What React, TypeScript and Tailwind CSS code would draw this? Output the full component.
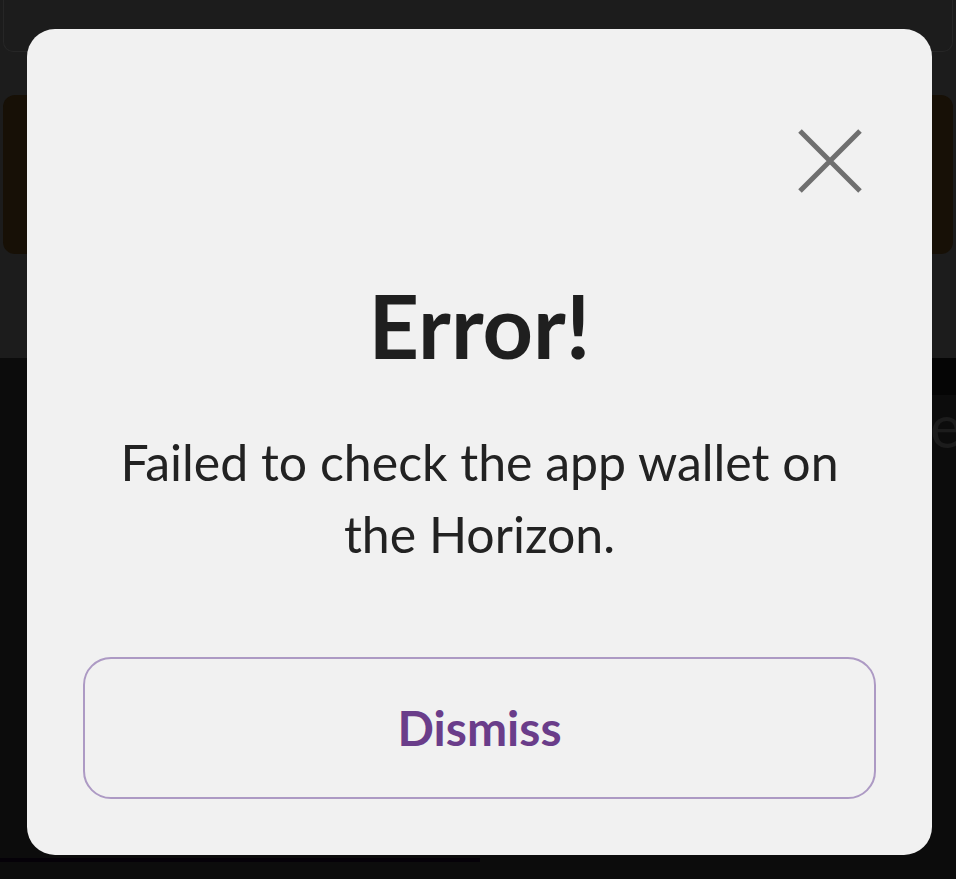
export default function App() {
  return (
    <div className="relative w-[956px] h-[879px] overflow-hidden bg-[#0c0c0c] font-['Lato','Open_Sans',sans-serif]">
      {/* Dimmed page behind */}
      <div className="flex flex-col">
        <div className="bg-[#1c1c1c] h-[358px] px-[3px] pt-0 flex flex-col">
          <div className="h-[52px] rounded-b-[10px] border border-t-0 border-[#262626]"></div>
          <div className="mt-[43px] h-[159px] rounded-[12px] bg-[#171006]"></div>
        </div>
        <div className="h-[500px] flex">
          <div className="flex-1"></div>
          <div className="w-[30px] flex flex-col">
            <div className="h-[37px] bg-[#050505]"></div>
            <div className="text-[60px] leading-[60px] text-[#1c1c1c] pl-[4px]">e</div>
          </div>
        </div>
        <div className="h-[4px] w-[480px] bg-[#050108]"></div>
      </div>

      {/* Modal */}
      <div className="absolute left-[27px] top-[29px] w-[905px] h-[826px] rounded-[28px] bg-[#f1f1f1] flex flex-col px-[56px]">
        <div className="flex justify-end pt-[99px] pr-[13px]">
          <button className="w-[66px] h-[66px] flex items-center justify-center">
            <svg width="66" height="66" viewBox="0 0 66 66" fill="none" stroke="#6f6f6f" strokeWidth="5">
              <path d="M3 3L63 63M63 3L3 63" />
            </svg>
          </button>
        </div>
        <h2 className="mt-[81px] text-center text-[88px] leading-[100px] font-bold text-[#1f1f1f]">Error!</h2>
        <p className="mt-[51px] text-center text-[50px] leading-[72px] text-[#222222] px-[24px]">
          Failed to check the app wallet on the Horizon.
        </p>
        <button className="mt-[87px] h-[142px] w-full rounded-[28px] border-2 border-[#ad9ac4] text-[48px] font-bold text-[#6a3d8a]">
          Dismiss
        </button>
      </div>
    </div>
  );
}
